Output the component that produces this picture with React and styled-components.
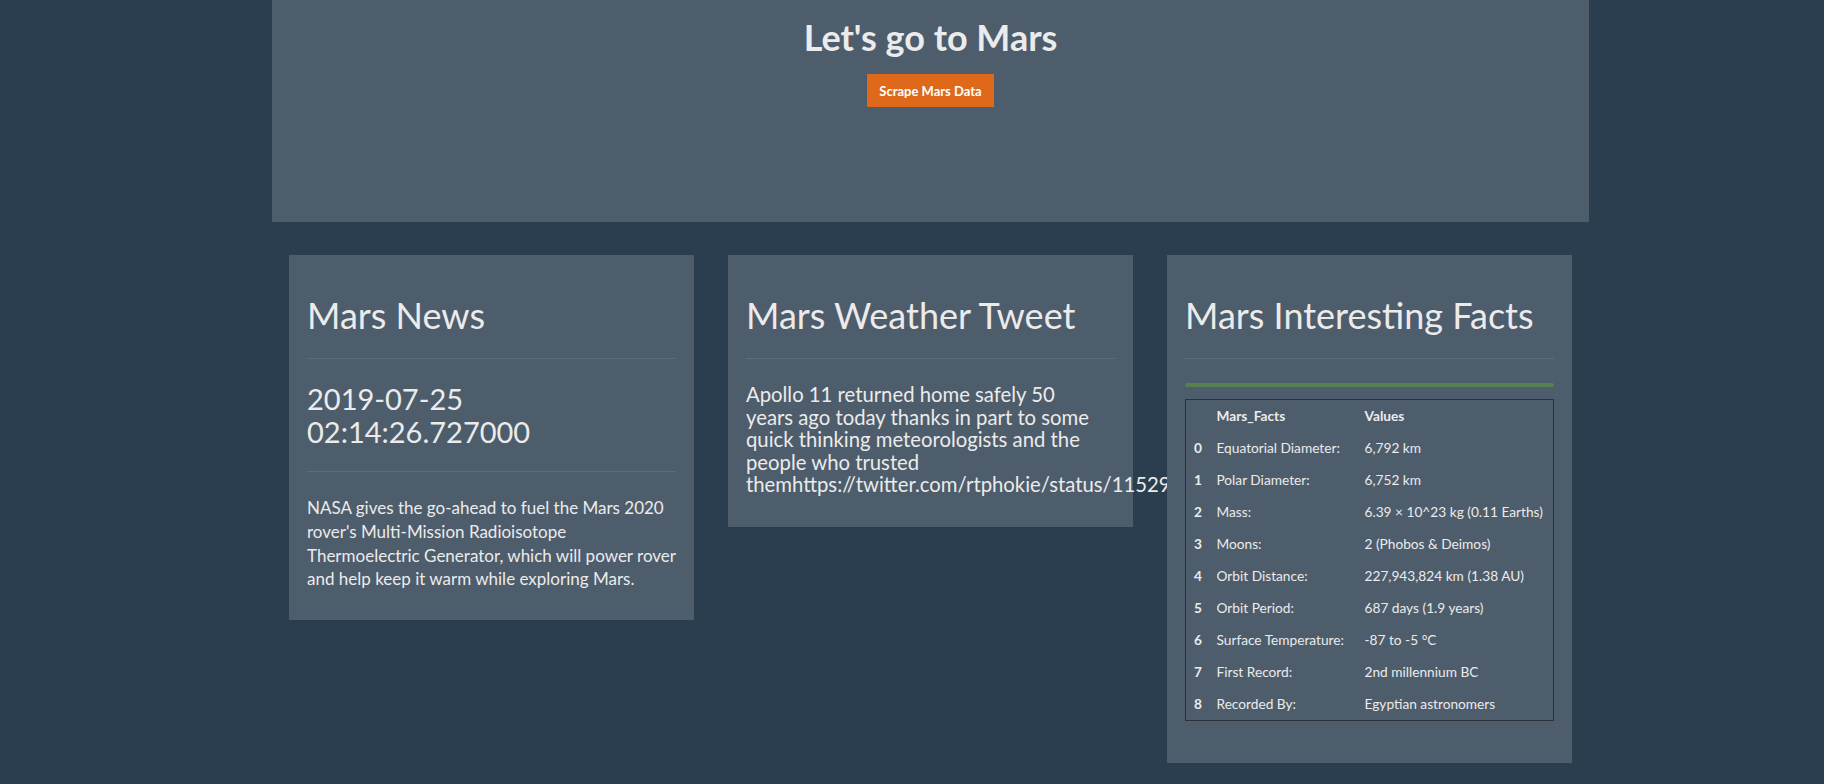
import React from "react";
import styled, { createGlobalStyle } from "styled-components";

const GlobalStyle = createGlobalStyle`
  html, body {
    margin: 0;
    padding: 0;
    background: #2b3e50;
    min-height: 100%;
  }
  body {
    font-family: Lato, "Open Sans", "Liberation Sans", sans-serif;
    color: #ebebeb;
    font-size: 15px;
    line-height: 1.42857;
  }
  * { box-sizing: border-box; }
`;

const Page = styled.div`
  width: 1317px;
  margin-left: 272px;
  min-height: 784px;
`;

const Jumbotron = styled.header`
  background: #4e5d6c;
  height: 222px;
  padding-top: 17px;
  display: flex;
  flex-direction: column;
  align-items: center;
`;

const Title = styled.h1`
  margin: 0;
  font-size: 36px;
  line-height: 40px;
  font-weight: 700;
  color: #ebebeb;
`;

const ScrapeButton = styled.button`
  margin-top: 17px;
  height: 33px;
  padding: 0 12px;
  border: none;
  border-radius: 0;
  background: #df691a;
  color: #ffffff;
  font-family: Lato, "Liberation Sans", sans-serif;
  font-weight: 700;
  font-size: 13px;
  cursor: pointer;
`;

const Row = styled.main`
  display: flex;
  align-items: flex-start;
  gap: 34px;
  padding: 0 17px;
  margin-top: 33px;
`;

const Card = styled.section`
  position: relative;
  width: 405px;
  flex: none;
  background: #4e5d6c;
  padding: 40px 18px ${(p) => p.$bottom}px 18px;
`;

const CardTitle = styled.h2`
  margin: 0;
  font-size: 36px;
  line-height: 40px;
  font-weight: 400;
  color: #ebebeb;
  white-space: nowrap;
`;

const Rule = styled.hr`
  margin: 23px 0 ${(p) => (p.$flush ? 0 : 23)}px;
  border: 0;
  border-top: 1px solid #5d6d7d;
  height: 0;
`;

const DateText = styled.h3`
  margin: 0;
  font-size: 29px;
  line-height: 33px;
  font-weight: 400;
  color: #ebebeb;
`;

const Lead = styled.p`
  margin: 0;
  margin-top: 24px;
  font-size: 17px;
  line-height: 23.8px;
  font-weight: 400;
`;

const Tweet = styled.h4`
  margin: 0;
  margin-top: 24px;
  max-width: 350px;
  font-size: 20.3px;
  line-height: 22.6px;
  font-weight: 400;
  color: #ebebeb;
  white-space: normal;
  overflow-wrap: normal;
`;

const GreenBar = styled.div`
  margin-top: 24px;
  height: 4px;
  border-radius: 2px;
  background: #587f51;
`;

const FactsTable = styled.table`
  margin-top: 12px;
  width: 100%;
  border-collapse: collapse;
  border: 1px solid #2a3138;
  table-layout: fixed;
  font-size: 13.7px;
`;

const Cell = styled.td`
  padding: 6px 8px;
  line-height: 20px;
  text-align: left;
  white-space: nowrap;
  font-weight: ${(p) => (p.$bold ? 700 : 400)};
  color: #ebebeb;
`;

const HeadCell = styled.th`
  padding: 6px 8px;
  line-height: 20px;
  text-align: left;
  white-space: nowrap;
  font-weight: 700;
  color: #ebebeb;
`;

const facts = [
  ["Equatorial Diameter:", "6,792 km"],
  ["Polar Diameter:", "6,752 km"],
  ["Mass:", "6.39 × 10^23 kg (0.11 Earths)"],
  ["Moons:", "2 (Phobos & Deimos)"],
  ["Orbit Distance:", "227,943,824 km (1.38 AU)"],
  ["Orbit Period:", "687 days (1.9 years)"],
  ["Surface Temperature:", "-87 to -5 °C"],
  ["First Record:", "2nd millennium BC"],
  ["Recorded By:", "Egyptian astronomers"],
];

export default function App() {
  return (
    <>
      <GlobalStyle />
      <Page>
        <Jumbotron>
          <Title>Let's go to Mars</Title>
          <ScrapeButton>Scrape Mars Data</ScrapeButton>
        </Jumbotron>
        <Row>
          <Card $bottom={29}>
            <CardTitle>Mars News</CardTitle>
            <Rule />
            <DateText>
              2019-07-25
              <br />
              02:14:26.727000
            </DateText>
            <Rule $flush />
            <Lead>
              NASA gives the go-ahead to fuel the Mars 2020 rover's Multi-Mission
              Radioisotope Thermoelectric Generator, which will power rover and
              help keep it warm while exploring Mars.
            </Lead>
          </Card>
          <Card $bottom={31}>
            <CardTitle>Mars Weather Tweet</CardTitle>
            <Rule $flush />
            <Tweet>
              Apollo 11 returned home safely 50 years ago today thanks in part to
              some quick thinking meteorologists and the people who trusted
              themhttps://twitter.com/rtphokie/status/1152997424584683520
            </Tweet>
          </Card>
          <Card $bottom={42}>
            <CardTitle>Mars Interesting Facts</CardTitle>
            <Rule $flush />
            <GreenBar />
            <FactsTable>
              <colgroup>
                <col style={{ width: 23 }} />
                <col style={{ width: 148 }} />
                <col />
              </colgroup>
              <thead>
                <tr>
                  <HeadCell />
                  <HeadCell>Mars_Facts</HeadCell>
                  <HeadCell>Values</HeadCell>
                </tr>
              </thead>
              <tbody>
                {facts.map(([k, v], i) => (
                  <tr key={k}>
                    <Cell as="th" $bold>
                      {i}
                    </Cell>
                    <Cell>{k}</Cell>
                    <Cell>{v}</Cell>
                  </tr>
                ))}
              </tbody>
            </FactsTable>
          </Card>
        </Row>
      </Page>
    </>
  );
}
